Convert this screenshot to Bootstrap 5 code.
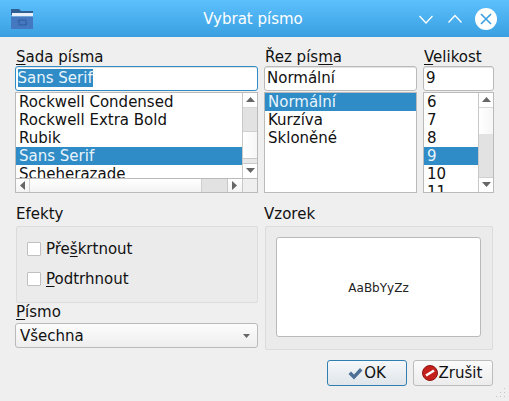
<!DOCTYPE html>
<html lang="cs">
<head>
<meta charset="utf-8">
<title>Vybrat písmo</title>
<link rel="stylesheet" href="https://cdn.jsdelivr.net/npm/bootstrap@5.3.0/dist/css/bootstrap.min.css">
<style>
html,body{margin:0;height:401px;overflow:hidden}
body{background:#efefef;font-family:"DejaVu Sans",sans-serif;font-size:15px;line-height:18px;color:#111;width:509px}
u{text-underline-offset:2px;text-decoration-thickness:1px}
.titlebar{height:37px;background:linear-gradient(#5cc0fd,#3a9fe0);color:#fff;font-size:15px;padding:0 12px 0 11px;position:relative}
.titletext{position:absolute;left:0;right:0;text-align:center;padding-right:3px}
.wbtns{gap:11px;margin-left:auto;position:relative}
.dlg{padding:11px 15px 0 15px;height:364px}
.fontcols{gap:6px}
.c1{width:243px}.c2{width:153px}.c3{width:71px}
.lbl{height:18px;line-height:18px;margin-bottom:0;padding-left:1px}
.lbl.flush{padding-left:0}
.fld{height:25px;background:#fff;border:1px solid #bababa;border-radius:3px;padding:2px 2px;line-height:19px;box-shadow:inset 0 1px 0 #e4e4e4;white-space:nowrap}
.fld.foc{border:1.5px solid #308cc6;padding-left:1.5px}
.sel{background:#308cc6;color:#e8f4fc}
.lst{height:101px;margin-top:1px;background:#fff;border:1px solid #bababa;overflow:hidden}
.lstwrap{height:99px;overflow:hidden}
.lstwrap.short{height:85px}
.lstbody{flex:1;overflow:hidden;min-width:0}
.itm{height:18px;line-height:18px;padding-left:3px;white-space:nowrap}
.vs{width:15px;border-left:1px solid #c8c8c8;background:#fff}
.arrowbox{height:14px;flex:none}
.arrowbox.up{border-bottom:1px solid #d8d8d8;height:15px}
.trk{flex:1;min-height:0;background:linear-gradient(90deg,#fff,#f6f6f6)}
.thumb{background:#e2e2e2;border-bottom:1px solid #d0d0d0}
.trkend{height:6px;flex:none;background:#e8e8e8;border-top:1px solid #c8c8c8;border-bottom:1px solid #c8c8c8}
.hs{height:14px;border-top:1px solid #bababa;background:linear-gradient(#fff,#f3f3f3)}
.harr{width:14px;flex:none}
.harr.lft{border-right:1px solid #d0d0d0}
.hthumb{width:27px;flex:none;background:#e2e2e2;border-left:1px solid #d0d0d0;border-right:1px solid #c8c8c8}
.hcorner{width:15px;flex:none;border-left:1px solid #c8c8c8;background:#efefef}
.grp{background:#ebebeb;border:1px solid #dcdcdc;border-radius:2px}
.efx{height:77px;margin-top:3px;margin-left:1px;padding:7px 10px 0 10px}
.chkrow{height:30px;gap:5px}
.chkbox{width:14px;height:14px;background:#fff;border:1px solid #c0c0c0;border-radius:1px;flex:none}
.combo{height:25px;border:1px solid #bababa;border-radius:3px;background:linear-gradient(#fcfcfc,#eeeeee);padding:0 7px 0 4px;margin-top:2px}
.smp{height:124px;margin-top:3px;margin-left:1px;padding:10px 11px 12px 10px}
.smpin{height:100px;background:#fff;border:1px solid #bababa;border-radius:3px;font-size:12px;line-height:14px;padding-top:2px;color:#222}
.lcol{width:243px}.rcol{width:229px;margin-left:6px}
.lowrow{margin-top:12px}
.acts{gap:6px;margin-top:10px;padding-right:1px}
.btnq{width:80px;height:26px;padding:0;border-radius:3px;font-size:15px;line-height:18px;color:#111;gap:1px;border:1px solid #bcbcbc;background:linear-gradient(#fbfbfb,#ececec)}
.btnq.dflt{border-color:#2f7fb0;background:linear-gradient(#f6f8fa,#dfe5ea)}
.btnq.cncl{padding-right:2px}
.grip{position:absolute;right:3px;bottom:3px}
</style>
</head>
<body>
<div class="titlebar d-flex align-items-center">
  <div class="titletext">Vybrat písmo</div>
  <svg width="22" height="20" viewBox="0 0 22 20" style="position:relative"><path d="M0 0h8l2 2h12v4H0z" fill="#2f5f93"/><rect x="1" y="4" width="21" height="3.500" fill="#e8f1fa"/><rect x="0" y="7.500" width="22" height="12.500" fill="#4479c2"/><path d="M8 11h7v5H8zM8 11l-1.500 1.500M15 16l1.500-1.500" fill="none" stroke="#2e5c9c"/></svg>
  <div class="wbtns d-flex align-items-center">
    <svg width="18" height="18" viewBox="0 0 18 18"><path d="M2.500 6l6.500 7 6.500-7" fill="none" stroke="#fff" stroke-width="1.300"/></svg>
    <svg width="18" height="18" viewBox="0 0 18 18"><path d="M2.500 12.500l6.500-7 6.500 7" fill="none" stroke="#fff" stroke-width="1.300"/></svg>
    <svg width="22" height="22" viewBox="0 0 22 22"><circle cx="11" cy="11" r="11" fill="#fff"/><path d="M6 6l10 10M16 6L6 16" stroke="#3a9fe0" stroke-width="1.600"/></svg>
  </div>
</div>
<div class="dlg">
  <div class="d-flex fontcols">
    <div class="c1">
      <div class="lbl"><u>S</u>ada písma</div>
      <div class="fld foc"><span class="sel">Sans Serif</span></div>
      <div class="lst">
        <div class="d-flex lstwrap short">
          <div class="lstbody">
            <div class="itm">Rockwell Condensed</div>
            <div class="itm">Rockwell Extra Bold</div>
            <div class="itm">Rubik</div>
            <div class="itm sel">Sans Serif</div>
            <div class="itm">Scheherazade</div>
          </div>
          <div class="vs d-flex flex-column">
            <div class="arrowbox up d-flex justify-content-center align-items-center"><svg width="9" height="6"><path d="M0 5h9L4.500 0z" fill="#666"/></svg></div>
            <div class="thumb" style="height:24px"></div>
            <div class="trk"></div>
            <div class="trkend"></div>
            <div class="arrowbox d-flex justify-content-center align-items-center"><svg width="9" height="6"><path d="M0 0h9L4.500 5z" fill="#666"/></svg></div>
          </div>
        </div>
        <div class="hs d-flex">
          <div class="harr lft d-flex justify-content-center align-items-center"><svg width="6" height="9"><path d="M5 0v9L0 4.500z" fill="#666"/></svg></div>
          <div class="flex-grow-1"></div>
          <div class="hthumb"></div>
          <div class="harr d-flex justify-content-center align-items-center"><svg width="6" height="9"><path d="M0 0v9l5-4.500z" fill="#666"/></svg></div>
          <div class="hcorner"></div>
        </div>
      </div>
    </div>
    <div class="c2">
      <div class="lbl">Řez pís<u>m</u>a</div>
      <div class="fld">Normální</div>
      <div class="lst">
        <div class="itm sel">Normální</div>
        <div class="itm">Kurzíva</div>
        <div class="itm">Skloněné</div>
      </div>
    </div>
    <div class="c3">
      <div class="lbl"><u>V</u>elikost</div>
      <div class="fld">9</div>
      <div class="lst">
        <div class="d-flex lstwrap">
          <div class="lstbody">
            <div class="itm">6</div>
            <div class="itm">7</div>
            <div class="itm">8</div>
            <div class="itm sel">9</div>
            <div class="itm">10</div>
            <div class="itm">11</div>
          </div>
          <div class="vs d-flex flex-column">
            <div class="arrowbox up d-flex justify-content-center align-items-center"><svg width="9" height="6"><path d="M0 5h9L4.500 0z" fill="#666"/></svg></div>
            <div class="trk" style="flex:none;height:26px"></div>
            <div class="thumb flex-grow-1"></div>
            <div class="arrowbox d-flex justify-content-center align-items-center"><svg width="9" height="6"><path d="M0 0h9L4.500 5z" fill="#666"/></svg></div>
          </div>
        </div>
      </div>
    </div>
  </div>
  <div class="d-flex lowrow">
    <div class="lcol">
      <div class="lbl">Efekty</div>
      <div class="grp efx">
        <div class="d-flex align-items-center chkrow"><span class="chkbox"></span><span>Pře<u>š</u>krtnout</span></div>
        <div class="d-flex align-items-center chkrow"><span class="chkbox"></span><span><u>P</u>odtrhnout</span></div>
      </div>
      <div class="lbl"><u>P</u>ísmo</div>
      <div class="combo d-flex align-items-center justify-content-between"><span>Všechna</span><svg width="7" height="4"><path d="M0 0h7L3.500 4z" fill="#666"/></svg></div>
    </div>
    <div class="rcol">
      <div class="lbl flush">Vzorek</div>
      <div class="grp smp"><div class="smpin d-flex align-items-center justify-content-center">AaBbYyZz</div></div>
    </div>
  </div>
  <div class="d-flex justify-content-end acts">
    <button class="btn btnq dflt d-flex align-items-center justify-content-center"><svg width="15" height="13" viewBox="0 0 15 13"><path d="M0.500 7l2.500-2.500 3 3 6-6.500 2.500 2.500-8.500 9z" fill="#4f7096"/></svg>OK</button>
    <button class="btn btnq cncl d-flex align-items-center justify-content-center"><svg width="16" height="16" viewBox="0 0 16 16"><circle cx="8" cy="8" r="7.500" fill="#c4201c" stroke="#8f1512"/><path d="M4 10.500L12 5.500" stroke="#fff" stroke-width="2.500"/></svg>Zrušit</button>
  </div>
</div>
<svg class="grip" width="11" height="11" viewBox="0 0 11 11"><g fill="#c4c4c4"><rect x="9" y="1" width="1" height="1"/><rect x="5" y="5" width="1" height="1"/><rect x="9" y="5" width="1" height="1"/><rect x="1" y="9" width="1" height="1"/><rect x="5" y="9" width="1" height="1"/><rect x="9" y="9" width="1" height="1"/></g></svg>
<script src="https://cdn.jsdelivr.net/npm/bootstrap@5.3.0/dist/js/bootstrap.bundle.min.js"></script>
</body>
</html>
